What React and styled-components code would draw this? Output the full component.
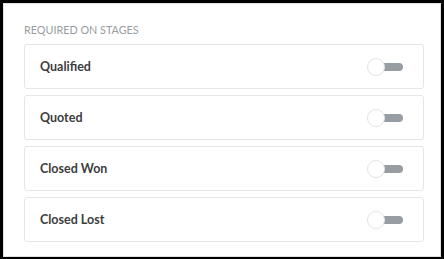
import React from "react";
import styled, { createGlobalStyle } from "styled-components";

const GlobalStyle = createGlobalStyle`
  html, body {
    margin: 0;
    padding: 0;
    background: #000;
  }
  body {
    font-family: Lato, "Open Sans", "Liberation Sans", sans-serif;
  }
`;

const Frame = styled.div`
  box-sizing: border-box;
  width: 444px;
  height: 259px;
  padding: 3px 3px 2px 3px;
  background: #000;
`;

const Panel = styled.div`
  box-sizing: border-box;
  height: 100%;
  background: #fff;
  border: 1px solid #e2e2e2;
  padding: 18px 16px 0 20px;
`;

const Heading = styled.div`
  font-size: 10.8px;
  line-height: 16px;
  text-transform: uppercase;
  color: #979ca1;
  margin-bottom: 6px;
`;

const List = styled.div`
  display: flex;
  flex-direction: column;
  gap: 6px;
`;

const Row = styled.div`
  box-sizing: border-box;
  height: 45px;
  display: flex;
  align-items: center;
  justify-content: space-between;
  padding: 0 20px 0 15px;
  border: 1px solid #e6e6e6;
  border-radius: 3px;
`;

const Label = styled.span`
  font-size: 12.5px;
  font-weight: 700;
  color: #3d3d3d;
`;

const Toggle = styled.div`
  position: relative;
  width: 36px;
  height: 18px;
  flex-shrink: 0;
`;

const Track = styled.div`
  position: absolute;
  left: 8px;
  right: 0;
  top: 5px;
  height: 8px;
  border-radius: 4px;
  background: ${(p) => (p.$on ? "#4a90e2" : "#979ea3")};
`;

const Knob = styled.div`
  position: absolute;
  left: ${(p) => (p.$on ? "18px" : "0")};
  top: 0;
  box-sizing: border-box;
  width: 18px;
  height: 18px;
  border-radius: 50%;
  background: #fff;
  border: 1.5px solid #e3e3e3;
`;

const stages = ["Qualified", "Quoted", "Closed Won", "Closed Lost"];

function Switch({ on }) {
  return (
    <Toggle>
      <Track $on={on} />
      <Knob $on={on} />
    </Toggle>
  );
}

export default function App() {
  return (
    <Frame>
      <GlobalStyle />
      <Panel>
        <Heading>Required on stages</Heading>
        <List>
          {stages.map((s) => (
            <Row key={s}>
              <Label>{s}</Label>
              <Switch on={false} />
            </Row>
          ))}
        </List>
      </Panel>
    </Frame>
  );
}
